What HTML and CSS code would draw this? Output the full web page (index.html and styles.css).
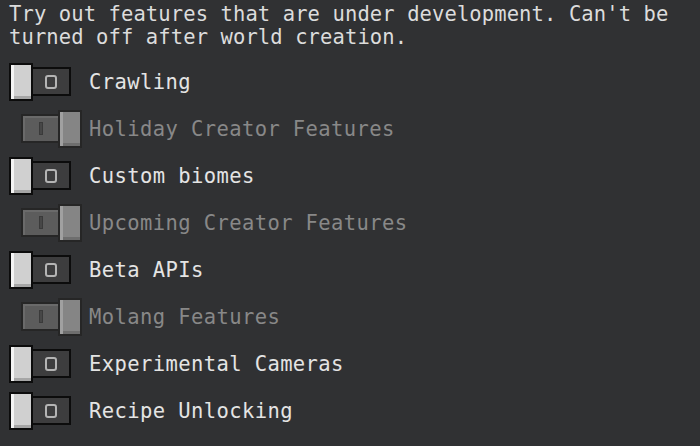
FILE: index.html
```html
<!DOCTYPE html>
<html lang="en">
<head>
    <meta charset="UTF-8">
    <meta name="viewport" content="width=device-width, initial-scale=1.0">
    <title>Experiments</title>
    <link rel="stylesheet" href="styles.css">
</head>
<body>
    <div class="panel">
        <p class="intro">Try out features that are under development. Can't be<br>turned off after world creation.</p>

        <div class="row">
            <div class="toggle off"><span class="knob"></span><span class="track"><span class="mark-o"></span></span></div>
            <span class="label">Crawling</span>
        </div>
        <div class="row locked">
            <div class="toggle on"><span class="track"><span class="mark-i"></span></span><span class="knob"></span></div>
            <span class="label">Holiday Creator Features</span>
        </div>
        <div class="row">
            <div class="toggle off"><span class="knob"></span><span class="track"><span class="mark-o"></span></span></div>
            <span class="label">Custom biomes</span>
        </div>
        <div class="row locked">
            <div class="toggle on"><span class="track"><span class="mark-i"></span></span><span class="knob"></span></div>
            <span class="label">Upcoming Creator Features</span>
        </div>
        <div class="row">
            <div class="toggle off"><span class="knob"></span><span class="track"><span class="mark-o"></span></span></div>
            <span class="label">Beta APIs</span>
        </div>
        <div class="row locked">
            <div class="toggle on"><span class="track"><span class="mark-i"></span></span><span class="knob"></span></div>
            <span class="label">Molang Features</span>
        </div>
        <div class="row">
            <div class="toggle off"><span class="knob"></span><span class="track"><span class="mark-o"></span></span></div>
            <span class="label">Experimental Cameras</span>
        </div>
        <div class="row">
            <div class="toggle off"><span class="knob"></span><span class="track"><span class="mark-o"></span></span></div>
            <span class="label">Recipe Unlocking</span>
        </div>
    </div>
</body>
</html>
```

FILE: styles.css
```css
* {
    margin: 0;
    padding: 0;
    box-sizing: border-box;
}

body {
    background: #303133;
    font-family: 'DejaVu Sans Mono', 'Liberation Mono', monospace;
    font-size: 20.5px;
    color: #e4e4e4;
    height: 100vh;
    overflow: hidden;
}

.panel {
    padding: 3px 0 0 9px;
}

.intro {
    line-height: 23px;
    color: #dcdcdc;
    letter-spacing: 0.1px;
    margin-bottom: 9px;
    white-space: nowrap;
}

.row {
    display: flex;
    align-items: center;
    height: 47px;
    gap: 7px;
}

.label {
    white-space: nowrap;
    letter-spacing: 0.4px;
}

.row.locked .label {
    color: #888888;
}

/* switch: knob + track, knob sits left when off */
.toggle {
    width: 73px;
    display: flex;
    align-items: center;
}

.toggle.off {
    justify-content: flex-start;
}

.toggle.on {
    justify-content: flex-end;
}

.knob {
    width: 24px;
    height: 38px;
    border: 2px solid #0c0c0c;
    background: #d0d0d0;
    box-shadow: inset 3px 0 0 #f4f4f4, inset 0 -3px 0 #a6a6a6;
    position: relative;
    z-index: 1;
}

.track {
    height: 29px;
    display: flex;
    align-items: center;
    justify-content: center;
    border: 2px solid #0c0c0c;
}

.off .track {
    width: 40px;
    margin-left: -2px;
    background: #3d3d3e;
}

.on .track {
    width: 39px;
    margin-right: -2px;
    background: #5c5c5c;
    border-color: #262626;
    box-shadow: inset 2px 2px 0 #6a6a6a;
}

.on .knob {
    background: #858585;
    border-color: #262626;
    box-shadow: inset 3px 0 0 #a0a0a0, inset 0 -3px 0 #6e6e6e;
}

.mark-o {
    width: 12px;
    height: 14px;
    border: 2px solid #b4b4b4;
    border-radius: 3px;
}

.mark-i {
    width: 4px;
    height: 13px;
    background: #474747;
    border: 1px solid #3a3a3a;
}
```
